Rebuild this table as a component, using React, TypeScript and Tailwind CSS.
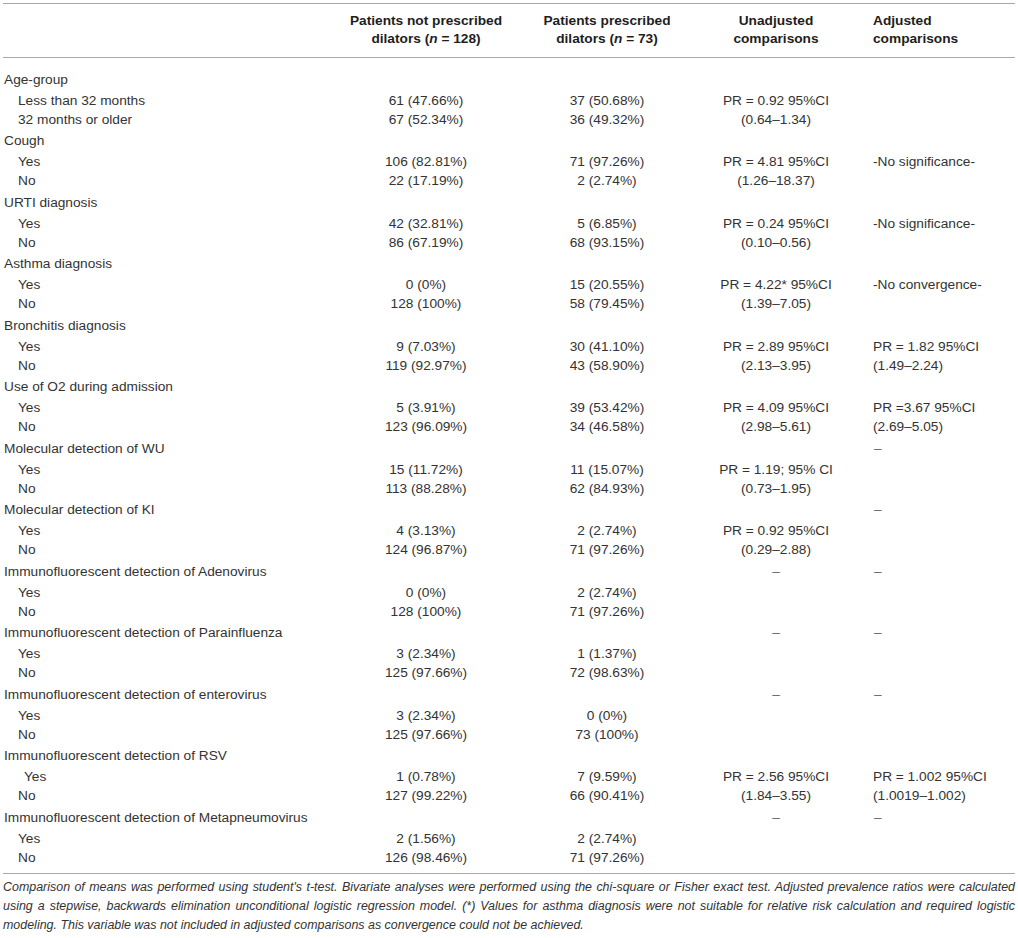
import React from "react";

type Row = { label: string; a: string; b: string; c?: string; d?: string; indent?: number };
type Group = { label: string; c?: string; d?: string; rows: [Row, Row] };

const groups: Group[] = [
  {
    label: "Age-group",
    rows: [
      { label: "Less than 32 months", a: "61 (47.66%)", b: "37 (50.68%)", c: "PR = 0.92 95%CI" },
      { label: "32 months or older", a: "67 (52.34%)", b: "36 (49.32%)", c: "(0.64–1.34)" },
    ],
  },
  {
    label: "Cough",
    rows: [
      { label: "Yes", a: "106 (82.81%)", b: "71 (97.26%)", c: "PR = 4.81 95%CI", d: "-No significance-" },
      { label: "No", a: "22 (17.19%)", b: "2 (2.74%)", c: "(1.26–18.37)" },
    ],
  },
  {
    label: "URTI diagnosis",
    rows: [
      { label: "Yes", a: "42 (32.81%)", b: "5 (6.85%)", c: "PR = 0.24 95%CI", d: "-No significance-" },
      { label: "No", a: "86 (67.19%)", b: "68 (93.15%)", c: "(0.10–0.56)" },
    ],
  },
  {
    label: "Asthma diagnosis",
    rows: [
      { label: "Yes", a: "0 (0%)", b: "15 (20.55%)", c: "PR = 4.22* 95%CI", d: "-No convergence-" },
      { label: "No", a: "128 (100%)", b: "58 (79.45%)", c: "(1.39–7.05)" },
    ],
  },
  {
    label: "Bronchitis diagnosis",
    rows: [
      { label: "Yes", a: "9 (7.03%)", b: "30 (41.10%)", c: "PR = 2.89 95%CI", d: "PR = 1.82 95%CI" },
      { label: "No", a: "119 (92.97%)", b: "43 (58.90%)", c: "(2.13–3.95)", d: "(1.49–2.24)" },
    ],
  },
  {
    label: "Use of O2 during admission",
    rows: [
      { label: "Yes", a: "5 (3.91%)", b: "39 (53.42%)", c: "PR = 4.09 95%CI", d: "PR =3.67 95%CI" },
      { label: "No", a: "123 (96.09%)", b: "34 (46.58%)", c: "(2.98–5.61)", d: "(2.69–5.05)" },
    ],
  },
  {
    label: "Molecular detection of WU",
    d: "–",
    rows: [
      { label: "Yes", a: "15 (11.72%)", b: "11 (15.07%)", c: "PR = 1.19; 95% CI" },
      { label: "No", a: "113 (88.28%)", b: "62 (84.93%)", c: "(0.73–1.95)" },
    ],
  },
  {
    label: "Molecular detection of KI",
    d: "–",
    rows: [
      { label: "Yes", a: "4 (3.13%)", b: "2 (2.74%)", c: "PR = 0.92 95%CI" },
      { label: "No", a: "124 (96.87%)", b: "71 (97.26%)", c: "(0.29–2.88)" },
    ],
  },
  {
    label: "Immunofluorescent detection of Adenovirus",
    c: "–",
    d: "–",
    rows: [
      { label: "Yes", a: "0 (0%)", b: "2 (2.74%)" },
      { label: "No", a: "128 (100%)", b: "71 (97.26%)" },
    ],
  },
  {
    label: "Immunofluorescent detection of Parainfluenza",
    c: "–",
    d: "–",
    rows: [
      { label: "Yes", a: "3 (2.34%)", b: "1 (1.37%)" },
      { label: "No", a: "125 (97.66%)", b: "72 (98.63%)" },
    ],
  },
  {
    label: "Immunofluorescent detection of enterovirus",
    c: "–",
    d: "–",
    rows: [
      { label: "Yes", a: "3 (2.34%)", b: "0 (0%)" },
      { label: "No", a: "125 (97.66%)", b: "73 (100%)" },
    ],
  },
  {
    label: "Immunofluorescent detection of RSV",
    rows: [
      { label: "Yes", a: "1 (0.78%)", b: "7 (9.59%)", c: "PR = 2.56 95%CI", d: "PR = 1.002 95%CI", indent: 1 },
      { label: "No", a: "127 (99.22%)", b: "66 (90.41%)", c: "(1.84–3.55)", d: "(1.0019–1.002)" },
    ],
  },
  {
    label: "Immunofluorescent detection of Metapneumovirus",
    c: "–",
    d: "–",
    rows: [
      { label: "Yes", a: "2 (1.56%)", b: "2 (2.74%)" },
      { label: "No", a: "126 (98.46%)", b: "71 (97.26%)" },
    ],
  },
];

const grid = "grid grid-cols-[330px_186px_176px_162px_1fr]";

function Cell({ v, className }: { v?: string; className: string }) {
  const dash = v === "–";
  return <div className={className + (dash ? " text-[#666]" : "")}>{v ?? ""}</div>;
}

export default function App() {
  return (
    <div
      className="w-[1018px] bg-white px-[3px] pt-[3px] text-[13.7px] text-[#333]"
      style={{ fontFamily: '"Liberation Sans", Arial, Helvetica, sans-serif' }}
    >
      <div className="border-t border-b border-[#a8a8a8]">
        <div className={grid + " pt-[8px] pb-[10px] font-bold leading-[17.5px] text-[#1e1e1e]"}>
          <div />
          <div className="text-center">
            Patients not prescribed
            <br />
            dilators (<i>n</i> = 128)
          </div>
          <div className="text-center">
            Patients prescribed
            <br />
            dilators (<i>n</i> = 73)
          </div>
          <div className="text-center">
            Unadjusted
            <br />
            comparisons
          </div>
          <div className="pl-[16px]">
            Adjusted
            <br />
            comparisons
          </div>
        </div>
      </div>
      <div className="border-b border-[#a8a8a8] pt-[9.3px] pb-[6px] leading-[19px]">
        {groups.map((g) => (
          <div key={g.label}>
            <div className={grid + " pt-[2.5px]"}>
              <div className="pl-[1px] whitespace-nowrap">{g.label}</div>
              <div />
              <div />
              <Cell v={g.c} className="text-center" />
              <Cell v={g.d} className="pl-[17px]" />
            </div>
            {g.rows.map((r, i) => (
              <div key={i} className={grid + (i === 0 ? " pt-[2px]" : "")}>
                <div className={r.indent ? "pl-[21px]" : "pl-[15px]"}>{r.label}</div>
                <div className="text-center">{r.a}</div>
                <div className="text-center">{r.b}</div>
                <Cell v={r.c} className="text-center" />
                <Cell v={r.d} className="pl-[16px]" />
              </div>
            ))}
          </div>
        ))}
      </div>
      <div className="pt-[4px] text-[12.45px] italic leading-[19px] text-[#333]">
        <div className="whitespace-nowrap text-justify [text-align-last:justify]">
          Comparison of means was performed using student's t-test. Bivariate analyses were performed using the chi-square or Fisher exact test. Adjusted prevalence ratios were calculated
        </div>
        <div className="whitespace-nowrap text-justify [text-align-last:justify]">
          using a stepwise, backwards elimination unconditional logistic regression model. (*) Values for asthma diagnosis were not suitable for relative risk calculation and required logistic
        </div>
        <div>
          modeling. This variable was not included in adjusted comparisons as convergence could not be achieved.
        </div>
      </div>
    </div>
  );
}
